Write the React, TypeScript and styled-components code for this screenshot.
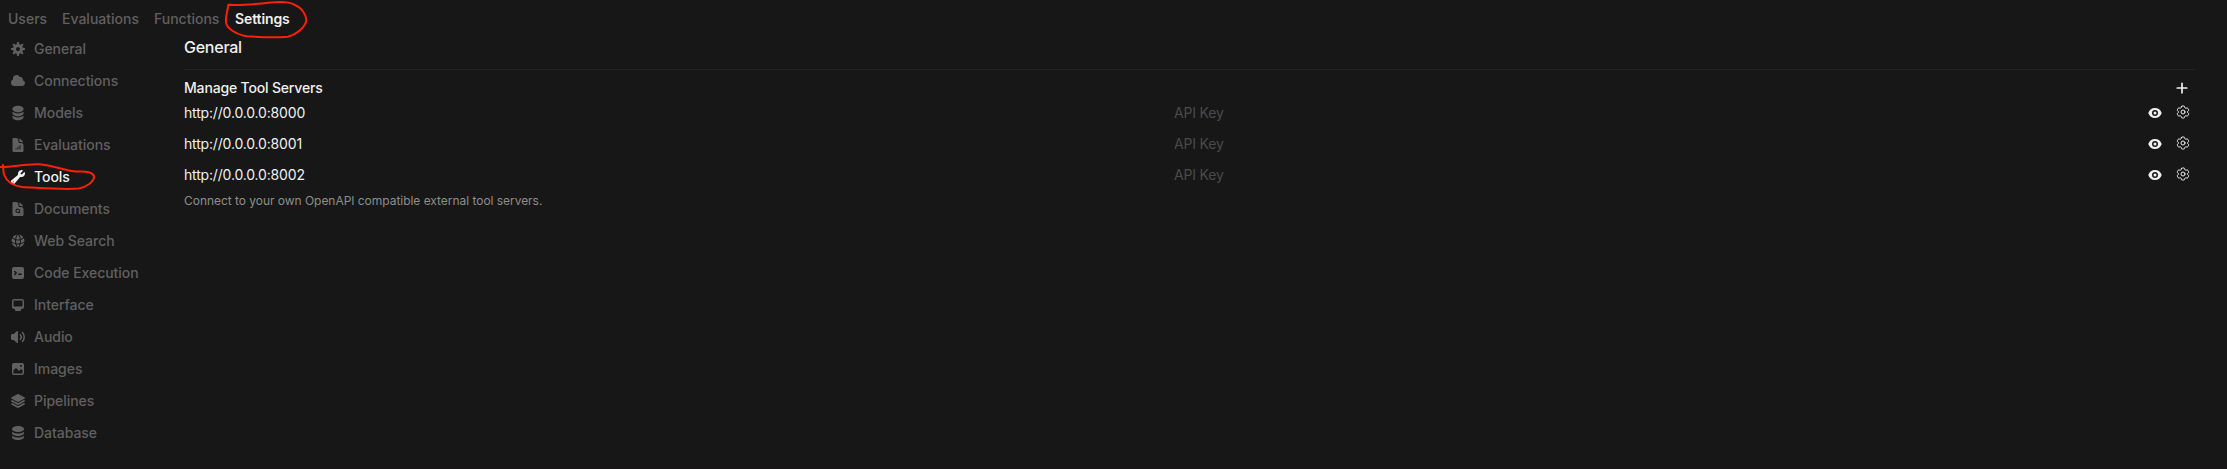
import React from 'react';
import styled, { createGlobalStyle } from 'styled-components';
import {
  HiDocumentChartBar,
  HiDocumentMagnifyingGlass,
  HiWrench,
  HiGlobeAlt,
  HiSquare3Stack3D,
  HiOutlineCog6Tooth,
} from 'react-icons/hi2';

const GlobalStyle = createGlobalStyle`
  * { box-sizing: border-box; }
  body {
    margin: 0;
    background: #171717;
    color: #f0f0f0;
    font-family: Inter, "Liberation Sans", sans-serif;
    font-size: 14px;
    overflow: hidden;
  }
  button {
    padding: 0;
    border: 0;
    background: none;
    color: inherit;
    font: inherit;
    letter-spacing: inherit;
  }
`;

const Page = styled.div`
  position: relative;
  height: 469px;
  padding: 9px 32px 0 8px;
  border-bottom: 2px solid #1a1517;
`;

const TopNav = styled.nav`
  display: flex;
  gap: 16px;
  height: 20px;
`;

const TopTab = styled.button<{ $active?: boolean; $width: number }>`
  width: ${(p) => p.$width}px;
  line-height: 20px;
  font-weight: ${(p) => (p.$active ? 600 : 500)};
  letter-spacing: ${(p) => (p.$active ? -0.1 : 0)}px;
  color: ${(p) => (p.$active ? '#f0f0f0' : '#606060')};
  text-align: left;
  white-space: nowrap;
`;

const Body = styled.div`
  display: flex;
`;

const Sidebar = styled.aside`
  display: flex;
  flex-direction: column;
  gap: 12px;
  width: 176px;
  padding: 10px 0 0 2px;
`;

const SideItem = styled.button<{ $active?: boolean }>`
  display: flex;
  align-items: center;
  gap: 8px;
  height: 20px;
  font-weight: 500;
  line-height: 20px;
  letter-spacing: -0.04px;
  color: ${(p) => (p.$active ? '#f0f0f0' : '#606060')};
  svg {
    width: 16px;
    height: 16px;
    flex: none;
  }
`;

const Main = styled.main`
  flex: 1;
  padding-top: 8px;
`;

const Title = styled.h1`
  margin: 0;
  font-size: 16px;
  font-weight: 500;
  line-height: 20px;
  letter-spacing: -0.25px;
`;

const Divider = styled.hr`
  height: 1px;
  margin: 12px 0 8px;
  border: 0;
  background: #242424;
`;

const SectionHead = styled.div`
  display: flex;
  align-items: center;
  justify-content: space-between;
  height: 19px;
  padding-right: 4px;
  font-weight: 500;
  letter-spacing: -0.17px;
`;

const ServerRow = styled.div`
  display: flex;
  align-items: center;
  height: 31px;
  letter-spacing: -0.17px;
`;

const Url = styled.div`
  width: 990px;
`;

const KeyField = styled.div`
  flex: 1;
  color: #4a4a4a;
`;

const RowActions = styled.div`
  display: flex;
  align-items: center;
  gap: 12px;
  padding-right: 4px;
`;

const IconButton = styled.button<{ $raise?: boolean }>`
  display: flex;
  padding-bottom: ${(p) => (p.$raise ? 2 : 0)}px;
`;

const Hint = styled.p`
  margin: 3px 0 0;
  font-size: 12px;
  line-height: 16px;
  letter-spacing: -0.035px;
  color: #8d8d8d;
`;

const Marks = styled.svg`
  position: absolute;
  inset: 0;
  pointer-events: none;
`;

const Micro = ({ d, size = 16, box = 16 }: { d: string[]; size?: number; box?: number }) => (
  <svg viewBox={`0 0 ${box} ${box}`} width={size} height={size} fill="currentColor">
    {d.map((p) => (
      <path key={p} d={p} fillRule="evenodd" clipRule="evenodd" />
    ))}
  </svg>
);

const COG = [
  'M6.955 1.45A.5.5 0 0 1 7.452 1h1.096a.5.5 0 0 1 .497.45l.17 1.699c.484.12.94.312 1.356.562l1.321-1.081a.5.5 0 0 1 .67.033l.774.775a.5.5 0 0 1 .034.67l-1.08 1.32c.25.417.44.873.561 1.357l1.699.17a.5.5 0 0 1 .45.497v1.096a.5.5 0 0 1-.45.497l-1.699.17c-.12.484-.312.94-.562 1.356l1.082 1.322a.5.5 0 0 1-.034.67l-.774.774a.5.5 0 0 1-.67.033l-1.322-1.08c-.416.25-.872.44-1.356.561l-.17 1.699a.5.5 0 0 1-.497.45H7.452a.5.5 0 0 1-.497-.45l-.17-1.699a4.973 4.973 0 0 1-1.356-.562L4.108 13.37a.5.5 0 0 1-.67-.033l-.774-.775a.5.5 0 0 1-.034-.67l1.08-1.32a4.971 4.971 0 0 1-.561-1.357l-1.699-.17A.5.5 0 0 1 1 8.548V7.452a.5.5 0 0 1 .45-.497l1.699-.17c.12-.484.312-.94.562-1.356L2.629 4.107a.5.5 0 0 1 .034-.67l.774-.774a.5.5 0 0 1 .67-.033L5.43 3.71a4.97 4.97 0 0 1 1.356-.561l.17-1.699ZM6 8c0 .538.212 1.026.558 1.385l.057.057a2 2 0 0 0 2.828-2.828l-.058-.056A2 2 0 0 0 6 8Z',
];
const CLOUD = [
  'M1 9.5A3.5 3.5 0 0 0 4.5 13H12a3 3 0 0 0 .917-5.857 2.503 2.503 0 0 0-3.198-3.019 3.5 3.5 0 0 0-6.628 2.171A3.5 3.5 0 0 0 1 9.5Z',
];
const STACK = [
  'M10 1c3.866 0 7 1.79 7 4s-3.134 4-7 4-7-1.79-7-4 3.134-4 7-4zm5.694 8.13c.464-.264.91-.583 1.306-.952V10c0 2.21-3.134 4-7 4s-7-1.79-7-4V8.178c.396.37.842.688 1.306.953C5.838 10.006 7.854 10.5 10 10.5s4.162-.494 5.694-1.37zM3 13.179V15c0 2.21 3.134 4 7 4s7-1.79 7-4v-1.822c-.396.37-.842.688-1.306.953-1.532.875-3.548 1.369-5.694 1.369s-4.162-.494-5.694-1.37A7.009 7.009 0 013 13.179z',
];
const DATABASE = [
  'M8 7c3.314 0 6-1.343 6-3s-2.686-3-6-3-6 1.343-6 3 2.686 3 6 3Z',
  'M8 8.5c1.84 0 3.579-.37 4.914-1.037A6.33 6.33 0 0 0 14 6.78V8c0 1.657-2.686 3-6 3S2 9.657 2 8V6.78c.346.273.72.5 1.087.683C4.42 8.131 6.16 8.5 8 8.5Z',
  'M8 12.5c1.84 0 3.579-.37 4.914-1.037.366-.183.74-.41 1.086-.684V12c0 1.657-2.686 3-6 3s-6-1.343-6-3v-1.22c.346.273.72.5 1.087.683C4.42 12.131 6.16 12.5 8 12.5Z',
];
const TERMINAL = [
  'M2 4a2 2 0 0 1 2-2h8a2 2 0 0 1 2 2v8a2 2 0 0 1-2 2H4a2 2 0 0 1-2-2V4Zm2.22 1.97a.75.75 0 0 0 0 1.06l.97.97-.97.97a.75.75 0 1 0 1.06 1.06l1.5-1.5a.75.75 0 0 0 0-1.06l-1.5-1.5a.75.75 0 0 0-1.06 0ZM8.75 8.5a.75.75 0 0 0 0 1.5h2.5a.75.75 0 0 0 0-1.5h-2.5Z',
];
const DESKTOP = [
  'M2 4.25A2.25 2.25 0 0 1 4.25 2h7.5A2.25 2.25 0 0 1 14 4.25v5.5A2.25 2.25 0 0 1 11.75 12h-1.312c.1.128.21.248.328.36a.75.75 0 0 1 .234.545v.345a.75.75 0 0 1-.75.75h-4.5a.75.75 0 0 1-.75-.75v-.345a.75.75 0 0 1 .234-.545c.118-.111.228-.232.328-.36H4.25A2.25 2.25 0 0 1 2 9.75v-5.5Zm2.25-.75a.75.75 0 0 0-.75.75v4.5c0 .414.336.75.75.75h7.5a.75.75 0 0 0 .75-.75v-4.5a.75.75 0 0 0-.75-.75h-7.5Z',
];
const SPEAKER = [
  'M7.557 2.066A.75.75 0 0 1 8 2.75v10.5a.75.75 0 0 1-1.248.56L3.59 11H2a1 1 0 0 1-1-1V6a1 1 0 0 1 1-1h1.59l3.162-2.81a.75.75 0 0 1 .805-.124ZM12.95 3.05a.75.75 0 1 0-1.06 1.06 5.5 5.5 0 0 1 0 7.78.75.75 0 1 0 1.06 1.06 7 7 0 0 0 0-9.9Z',
  'M10.828 5.172a.75.75 0 1 0-1.06 1.06 2.5 2.5 0 0 1 0 3.536.75.75 0 1 0 1.06 1.06 4 4 0 0 0 0-5.656Z',
];
const PHOTO = [
  'M2 4a2 2 0 0 1 2-2h8a2 2 0 0 1 2 2v8a2 2 0 0 1-2 2H4a2 2 0 0 1-2-2V4Zm10.5 5.707a.5.5 0 0 0-.146-.353l-1-1a.5.5 0 0 0-.708 0L9.354 9.646a.5.5 0 0 1-.708 0L6.354 7.354a.5.5 0 0 0-.708 0l-2 2a.5.5 0 0 0-.146.353V12a.5.5 0 0 0 .5.5h8a.5.5 0 0 0 .5-.5V9.707ZM12 5a1 1 0 1 1-2 0 1 1 0 0 1 2 0Z',
];
const EYE = [
  'M8 9.5a1.5 1.5 0 1 0 0-3 1.5 1.5 0 0 0 0 3Z',
  'M1.38 8.28a.87.87 0 0 1 0-.566 7.003 7.003 0 0 1 13.238.006.87.87 0 0 1 0 .566A7.003 7.003 0 0 1 1.379 8.28ZM11 8a3 3 0 1 1-6 0 3 3 0 0 1 6 0Z',
];
const PLUS = [
  'M8.75 3.75a.75.75 0 0 0-1.5 0v3.5h-3.5a.75.75 0 0 0 0 1.5h3.5v3.5a.75.75 0 0 0 1.5 0v-3.5h3.5a.75.75 0 0 0 0-1.5h-3.5v-3.5Z',
];

const tabs = [
  { label: 'Users', width: 38 },
  { label: 'Evaluations', width: 76 },
  { label: 'Functions', width: 65 },
  { label: 'Settings', width: 60, active: true },
];

const sections = [
  { label: 'General', icon: <Micro d={COG} /> },
  { label: 'Connections', icon: <Micro d={CLOUD} /> },
  { label: 'Models', icon: <Micro d={STACK} box={20} /> },
  { label: 'Evaluations', icon: <HiDocumentChartBar /> },
  { label: 'Tools', icon: <HiWrench />, active: true },
  { label: 'Documents', icon: <HiDocumentMagnifyingGlass /> },
  { label: 'Web Search', icon: <HiGlobeAlt /> },
  { label: 'Code Execution', icon: <Micro d={TERMINAL} /> },
  { label: 'Interface', icon: <Micro d={DESKTOP} /> },
  { label: 'Audio', icon: <Micro d={SPEAKER} /> },
  { label: 'Images', icon: <Micro d={PHOTO} /> },
  { label: 'Pipelines', icon: <HiSquare3Stack3D /> },
  { label: 'Database', icon: <Micro d={DATABASE} /> },
];

const servers = ['http://0.0.0.0:8000', 'http://0.0.0.0:8001', 'http://0.0.0.0:8002'];

export default function App() {
  return (
    <Page>
      <GlobalStyle />
      <TopNav>
        {tabs.map((t) => (
          <TopTab key={t.label} $active={t.active} $width={t.width}>
            {t.label}
          </TopTab>
        ))}
      </TopNav>
      <Body>
        <Sidebar>
          {sections.map((s) => (
            <SideItem key={s.label} $active={s.active}>
              {s.icon}
              {s.label}
            </SideItem>
          ))}
        </Sidebar>
        <Main>
          <Title>General</Title>
          <Divider />
          <SectionHead>
            Manage Tool Servers
            <IconButton aria-label="Add server">
              <Micro d={PLUS} size={18} />
            </IconButton>
          </SectionHead>
          {servers.map((url) => (
            <ServerRow key={url}>
              <Url>{url}</Url>
              <KeyField>API Key</KeyField>
              <RowActions>
                <IconButton aria-label="Show key">
                  <Micro d={EYE} />
                </IconButton>
                <IconButton aria-label="Configure" $raise>
                  <HiOutlineCog6Tooth size={16} />
                </IconButton>
              </RowActions>
            </ServerRow>
          ))}
          <Hint>Connect to your own OpenAPI compatible external tool servers.</Hint>
        </Main>
      </Body>
      <Marks width="320" height="200" fill="none" stroke="#fb2106" strokeWidth="2" strokeLinecap="round" strokeLinejoin="round">
        <path d="M229 4.8C243 5.6 256 4 268 2.8C279 1.5 289 1.5 294 4.5C301 7 306 14 306.300 20C306 26 298 34 288 36.700C277 37.600 258 37 247 36.300C235 34 226 28 226 21.500C225.500 16 227.500 12 228.300 4.800" />
        <path d="M0 167C12 167.500 25 163.500 39 164.200C52 165 62 169.500 72 171C81 172.500 91 170 94 176C94.500 182 86 187 79 188.500C63 190 42 188 22 187C12 185.500 6 180 4 174.500C3 171 3.500 168 3 165" />
      </Marks>
    </Page>
  );
}
